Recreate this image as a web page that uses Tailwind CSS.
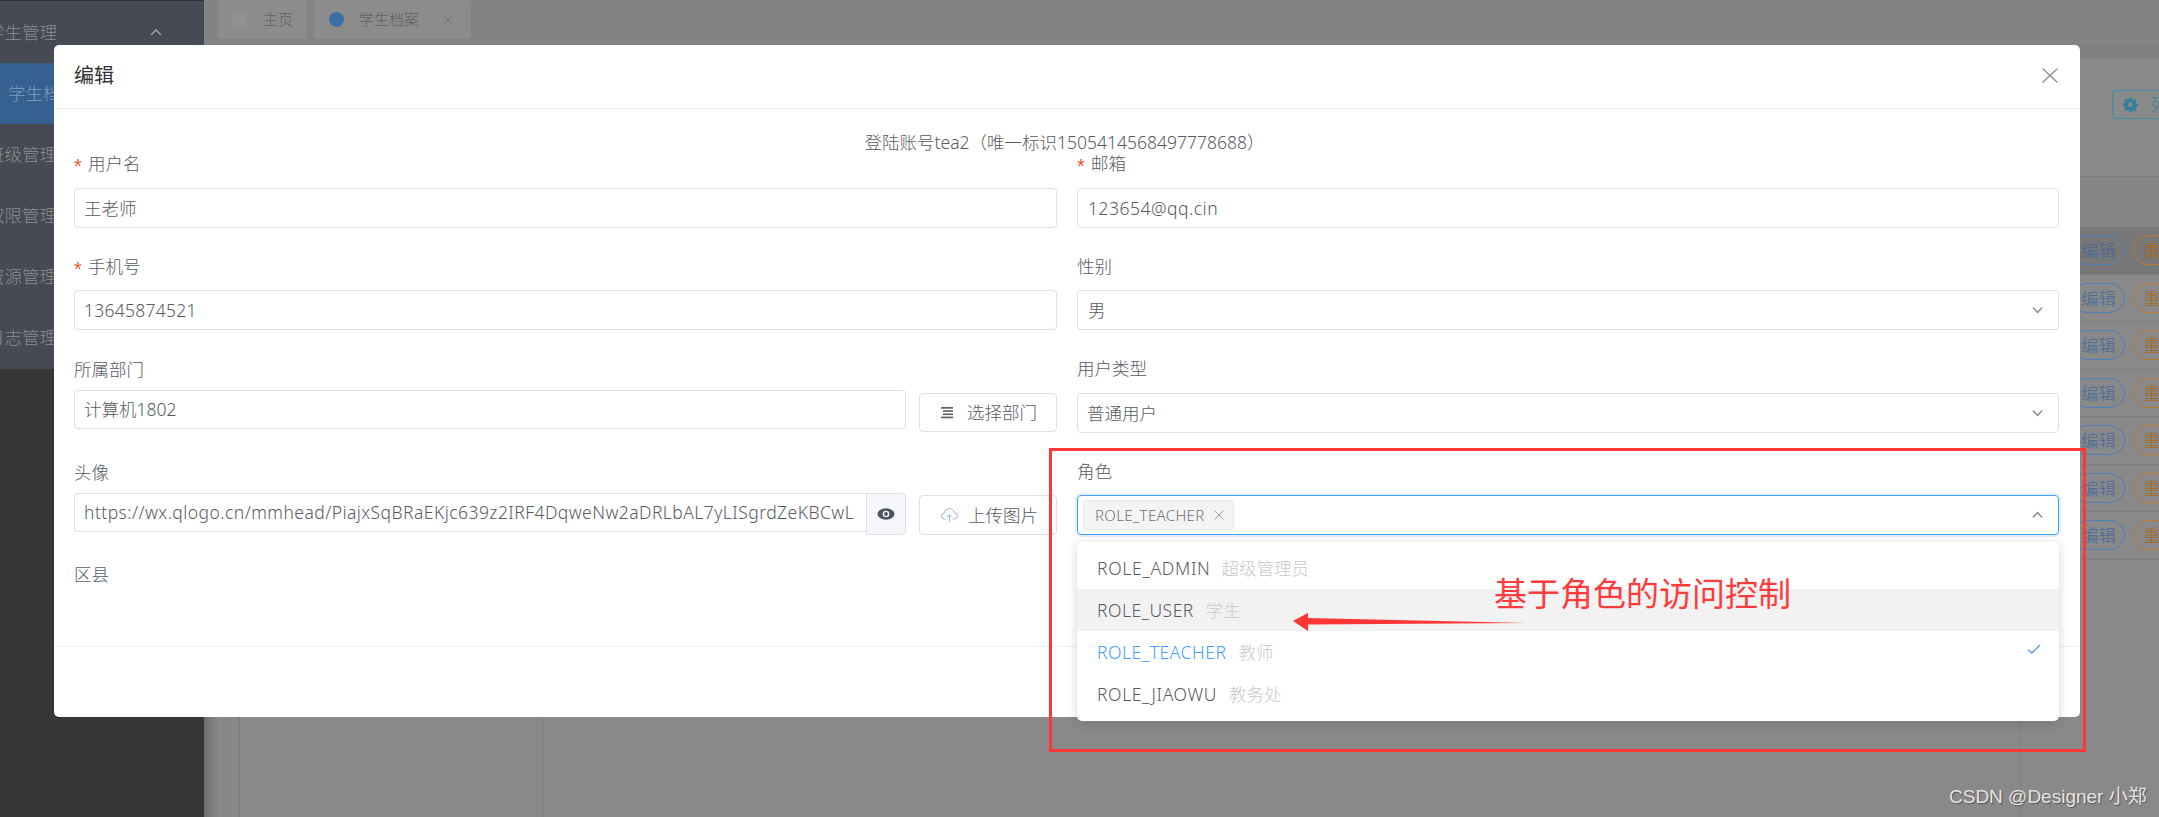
<!DOCTYPE html>
<html lang="zh-CN">
<head>
<meta charset="utf-8">
<script src="https://cdn.jsdelivr.net/npm/@tailwindcss/browser@4"></script>
<title>编辑</title>
</head>
<body class="m-0 overflow-hidden">
<div class="relative flex h-[817px] w-[2159px] overflow-hidden bg-[#898989] font-['Noto_Sans','Noto_Sans_CJK_SC',sans-serif] font-light text-[17.5px] text-[#565a63]">

  <!-- dimmed sidebar -->
  <aside class="flex h-full w-[204px] shrink-0 flex-col bg-[#363636] text-[#8c8c8c]">
    <div class="flex h-[369px] flex-col border-t border-[#333] bg-[#454a54]">
      <div class="flex h-[62px] items-center justify-between pr-[42px]"><span class="-ml-[13px] whitespace-nowrap">学生管理</span>
        <svg class="h-[8px] w-[12px]" viewBox="0 0 12 8" fill="none" stroke="#9a9a9a" stroke-width="1.6"><path d="M1 7l5-5 5 5"/></svg></div>
      <div class="flex h-[61px] items-center bg-[#35608f] pl-2 text-[#7f9dbb]"><span class="whitespace-nowrap">学生档案</span></div>
      <div class="flex h-[61px] items-center"><span class="-ml-[13px] whitespace-nowrap">班级管理</span></div>
      <div class="flex h-[61px] items-center"><span class="-ml-[13px] whitespace-nowrap">权限管理</span></div>
      <div class="flex h-[61px] items-center"><span class="-ml-[13px] whitespace-nowrap">资源管理</span></div>
      <div class="flex h-[61px] items-center"><span class="-ml-[13px] whitespace-nowrap">日志管理</span></div>
    </div>
  </aside>

  <!-- dimmed page -->
  <main class="flex h-full min-w-0 flex-1 flex-col">
    <div class="flex h-[45px] shrink-0 items-start gap-[7px] bg-[#838383] pl-[14px] text-[15px] text-[#5f5f5f]">
      <div class="flex h-[39px] w-[89px] items-center rounded-[3px] bg-[#8c8c8c] pl-[14px]"><span class="h-[15px] w-[15px] rounded-full bg-[#8e9290]"></span><span class="ml-[16px]">主页</span></div>
      <div class="flex h-[39px] w-[157px] items-center rounded-[3px] bg-[#8c8c8c] pl-[15px]"><span class="h-[15px] w-[15px] rounded-full bg-[#3b6ea5]"></span><span class="ml-[15px]">学生档案</span>
        <svg class="ml-[24px] h-[10px] w-[10px]" viewBox="0 0 10 10" fill="none" stroke="#6f6f6f" stroke-width="0.9"><path d="M1 1l8 8M9 1l-8 8"/></svg></div>
    </div>
    <div class="h-[14px] shrink-0 bg-[#7f7f7f]"></div>
    <div class="flex min-h-0 flex-1">
      <div class="w-[14px] shrink-0 bg-gradient-to-r from-[#6e6e6e] to-[#878787]"></div>
      <div class="w-[21px] shrink-0 bg-[#888]"></div>
      <div class="w-[304px] shrink-0 border-x border-[#7b7b7b]"></div>
      <div class="flex min-w-0 flex-1 flex-col text-[17.5px]">
        <div class="flex h-[118px] shrink-0 items-start justify-end border-b border-[#7d7d7d] bg-[#8a8a8a] pt-[31px]">
          <div class="-mr-[40px] flex h-[29px] w-[87px] items-center gap-[11px] rounded-[3px] border border-[#3f8fae] pl-[10px] text-[#3d7f99]">
            <svg class="h-[16px] w-[16px] shrink-0" viewBox="0 0 24 24" fill="#2f7f9f"><path fill-rule="evenodd" d="M10 1h4l.6 3.2 2 .9 2.7-1.8 2.8 2.8-1.8 2.7.9 2 3.2.6v4l-3.2.6-.9 2 1.8 2.7-2.8 2.8-2.7-1.8-2 .9L14 25h-4l-.6-3.2-2-.9-2.7 1.8-2.8-2.8 1.8-2.7-.9-2L0 14.6v-4l3.2-.6.9-2L2.300 5.300 5.100 2.500l2.700 1.800 2-.9zM12 8.500a4 4 0 100 8 4 4 0 000-8z" transform="scale(.92)"/></svg>
            <span class="whitespace-nowrap">列设置</span>
          </div>
        </div>
        <div class="h-[51px] shrink-0 border-b border-[#7d7d7d] bg-[#858585]"></div>
        <div class="flex h-[47.500px] shrink-0 items-center justify-end gap-[8px] border-b border-[#7f7f7f] bg-[#777] -mt-[1px]">
          <span class="flex h-[30px] w-[53px] items-center justify-center rounded-full border border-[#4a7fb8] text-[#46699a]">编辑</span><span class="-mr-[40px] flex h-[30px] w-[66px] items-center rounded-full border border-[#b47c2e] pl-[9px] text-[#a5691f]">重置</span>
        </div>
        <div class="flex h-[47.500px] shrink-0 items-center justify-end gap-[8px] border-b border-[#7f7f7f]">
          <span class="flex h-[30px] w-[53px] items-center justify-center rounded-full border border-[#4a7fb8] text-[#46699a]">编辑</span><span class="-mr-[40px] flex h-[30px] w-[66px] items-center rounded-full border border-[#b47c2e] pl-[9px] text-[#a5691f]">重置</span>
        </div>
        <div class="flex h-[47.500px] shrink-0 items-center justify-end gap-[8px] border-b border-[#7f7f7f]">
          <span class="flex h-[30px] w-[53px] items-center justify-center rounded-full border border-[#4a7fb8] text-[#46699a]">编辑</span><span class="-mr-[40px] flex h-[30px] w-[66px] items-center rounded-full border border-[#b47c2e] pl-[9px] text-[#a5691f]">重置</span>
        </div>
        <div class="flex h-[47.500px] shrink-0 items-center justify-end gap-[8px] border-b border-[#7f7f7f]">
          <span class="flex h-[30px] w-[53px] items-center justify-center rounded-full border border-[#4a7fb8] text-[#46699a]">编辑</span><span class="-mr-[40px] flex h-[30px] w-[66px] items-center rounded-full border border-[#b47c2e] pl-[9px] text-[#a5691f]">重置</span>
        </div>
        <div class="flex h-[47.500px] shrink-0 items-center justify-end gap-[8px] border-b border-[#7f7f7f]">
          <span class="flex h-[30px] w-[53px] items-center justify-center rounded-full border border-[#4a7fb8] text-[#46699a]">编辑</span><span class="-mr-[40px] flex h-[30px] w-[66px] items-center rounded-full border border-[#b47c2e] pl-[9px] text-[#a5691f]">重置</span>
        </div>
        <div class="flex h-[47.500px] shrink-0 items-center justify-end gap-[8px] border-b border-[#7f7f7f]">
          <span class="flex h-[30px] w-[53px] items-center justify-center rounded-full border border-[#4a7fb8] text-[#46699a]">编辑</span><span class="-mr-[40px] flex h-[30px] w-[66px] items-center rounded-full border border-[#b47c2e] pl-[9px] text-[#a5691f]">重置</span>
        </div>
        <div class="flex h-[47.500px] shrink-0 items-center justify-end gap-[8px] border-b border-[#7f7f7f]">
          <span class="flex h-[30px] w-[53px] items-center justify-center rounded-full border border-[#4a7fb8] text-[#46699a]">编辑</span><span class="-mr-[40px] flex h-[30px] w-[66px] items-center rounded-full border border-[#b47c2e] pl-[9px] text-[#a5691f]">重置</span>
        </div>
        <div class="mr-[138px] flex-1 border-r border-[#7d7d7d]"></div>
      </div>
    </div>
  </main>

  <!-- dialog -->
  <section class="absolute left-[54px] top-[45px] flex h-[672px] w-[2026px] flex-col rounded-[5px] bg-white">
    <header class="flex h-[64px] shrink-0 items-center justify-between border-b border-[#ebeef5] pb-[2px] pl-5 pr-[22px]">
      <h2 class="text-[20px] font-normal text-[#303133]">编辑</h2>
      <svg class="h-[15px] w-[16px]" viewBox="0 0 16 15" fill="none" stroke="#85888e" stroke-width="1.100"><path d="M.5.5l15 14M15.500.5l-15 14"/></svg>
    </header>
    <div class="flex-1 pl-5 pr-[21px] pt-[21px]">
      <p class="h-6 pr-[4px] text-center leading-6">登陆账号tea2（唯一标识1505414568497778688）</p>
      <div class="-mt-[2px] grid grid-cols-[983px_982px] grid-rows-[103px_102px_103px_103px_auto] gap-x-[20px]">
        <div>
          <div class="mb-3 flex h-6 items-center pb-[2px]"><span class="w-[14px] translate-y-[3px] font-['Liberation_Sans',sans-serif] text-[20px] leading-none text-[#ef5a30]">*</span>用户名</div>
          <div class="flex h-10 items-center rounded-[4px] border border-[#dcdfe6] px-[9px]">王老师</div>
        </div>
        <div>
          <div class="mb-3 flex h-6 items-center pb-[2px]"><span class="w-[14px] translate-y-[3px] font-['Liberation_Sans',sans-serif] text-[20px] leading-none text-[#ef5a30]">*</span>邮箱</div>
          <div class="flex h-10 items-center rounded-[4px] border border-[#dcdfe6] px-[10px] tracking-[0.5px]">123654@qq.cin</div>
        </div>
        <div>
          <div class="mb-[11px] flex h-6 items-center pb-[2px]"><span class="w-[14px] translate-y-[3px] font-['Liberation_Sans',sans-serif] text-[20px] leading-none text-[#ef5a30]">*</span>手机号</div>
          <div class="flex h-10 items-center rounded-[4px] border border-[#dcdfe6] px-[9px] tracking-[0.25px]">13645874521</div>
        </div>
        <div>
          <div class="mb-[11px] h-6 leading-[22px]">性别</div>
          <div class="flex h-10 items-center justify-between rounded-[4px] border border-[#dcdfe6] pl-[10px] pr-[15px]">男
            <svg class="h-[8px] w-[11px]" viewBox="0 0 11 8" fill="none" stroke="#808389" stroke-width="1.300"><path d="M1 1.500l4.500 5 4.500-5"/></svg></div>
        </div>
        <div>
          <div class="mb-[9px] h-6 leading-6">所属部门</div>
          <div class="flex items-start">
            <div class="flex h-[39px] w-[832px] items-center rounded-[4px] border border-[#dcdfe6] px-[9px]">计算机1802</div>
            <button class="ml-[13px] mt-[3px] flex h-[39px] w-[138px] items-center rounded-[4px] border border-[#dcdfe6] pl-[21px]">
              <svg class="h-[13px] w-[13px] shrink-0" viewBox="0 0 13 13" fill="#606266"><rect x="0" y="1" width="12" height="1.700"/><rect x="2" y="4.200" width="10" height="1.700"/><rect x="2" y="7.400" width="10" height="1.700"/><rect x="0" y="10.600" width="12" height="1.700"/></svg>
              <span class="ml-[13px] whitespace-nowrap">选择部门</span>
            </button>
          </div>
        </div>
        <div>
          <div class="mb-[12px] h-6 leading-[22px]">用户类型</div>
          <div class="flex h-[40px] items-center justify-between rounded-[4px] border border-[#dcdfe6] pl-[9px] pr-[15px]">普通用户
            <svg class="h-[8px] w-[11px]" viewBox="0 0 11 8" fill="none" stroke="#808389" stroke-width="1.300"><path d="M1 1.500l4.500 5 4.500-5"/></svg></div>
        </div>
        <div>
          <div class="mb-[9px] h-6 leading-6">头像</div>
          <div class="flex items-start">
            <div class="flex h-[39px] w-[792px] items-center overflow-hidden rounded-l-[4px] border border-r-0 border-[#dcdfe6] pl-[9px] pr-[10px]"><span class="block overflow-hidden whitespace-nowrap tracking-[0.45px]">https://wx.qlogo.cn/mmhead/PiajxSqBRaEKjc639z2IRF4DqweNw2aDRLbAL7yLISgrdZeKBCwL</span></div>
            <div class="flex h-[42px] w-[40px] items-center justify-center rounded-r-[4px] border border-[#dcdfe6] bg-[#f5f7fa]">
              <svg class="h-[12px] w-[18px]" viewBox="0 0 18 12"><ellipse cx="9" cy="6" rx="8.500" ry="5.800" fill="#4f5461"/><circle cx="9" cy="6" r="3.300" fill="#f5f7fa"/><circle cx="9" cy="6" r="1.900" fill="#4f5461"/></svg>
            </div>
            <button class="ml-[13px] mt-[2px] flex h-[40px] w-[138px] items-center rounded-[4px] border border-[#dcdfe6] pl-[21px]">
              <svg class="h-[15px] w-[17px] shrink-0" viewBox="0 0 17 15" fill="none" stroke="#a9b0ba" stroke-width="1"><path d="M5 11H3.500a3 3 0 01-.3-6A5.300 5.300 0 0113.500 4.500a3.300 3.300 0 01.2 6.500H12"/><path d="M8.500 14V7M6 9.200l2.500-2.500 2.500 2.500" stroke="#8cc4e8"/></svg>
              <span class="ml-[10px] whitespace-nowrap">上传图片</span>
            </button>
          </div>
        </div>
        <div class="relative">
          <div class="mb-[11px] h-6 leading-[22px]">角色</div>
          <div class="flex h-[40px] items-center justify-between rounded-[4px] border border-[#409eff] pl-[5px] pr-[15px] ring-2 ring-[#409eff]/15">
            <span class="flex h-[30px] w-[151px] items-center rounded-[3px] border border-[#e9e9eb] bg-[#f4f4f5] pl-[11px] text-[15px] tracking-[0.35px] text-[#6d7078]">ROLE_TEACHER
              <svg class="ml-[9px] h-[10px] w-[10px]" viewBox="0 0 10 10" fill="none" stroke="#909399" stroke-width="0.900"><path d="M.5.500l9 9M9.500.500l-9 9"/></svg></span>
            <svg class="h-[8px] w-[11px]" viewBox="0 0 11 8" fill="none" stroke="#808389" stroke-width="1.300"><path d="M1 6.500l4.500-5 4.500 5"/></svg>
          </div>
          <ul class="absolute left-0 right-0 top-[82px] z-10 rounded-[5px] bg-white pb-[6px] pt-[5px] shadow-[0_2px_12px_rgba(0,0,0,0.16)]">
            <li class="flex h-[42px] items-center pl-[20px]"><span class="tracking-[0.7px]">ROLE_ADMIN</span><span class="ml-[11px] text-[#c8c9cc]">超级管理员</span></li>
            <li class="flex h-[42px] items-center bg-[#f2f2f2] pl-[20px]"><span class="tracking-[0.5px]">ROLE_USER</span><span class="ml-[12px] text-[#c8c9cc]">学生</span></li>
            <li class="flex h-[42px] items-center justify-between pl-[20px] pr-[18px] text-[#409eff]"><span><span class="tracking-[0.55px]">ROLE_TEACHER</span><span class="ml-[12px] text-[#c8c9cc]">教师</span></span>
              <svg class="-mt-[6px] h-[10px] w-[14px]" viewBox="0 0 14 10" fill="none" stroke="#5b93e6" stroke-width="1.300"><path d="M1 5.500l3.800 3.500L13 1"/></svg></li>
            <li class="flex h-[42px] items-center pl-[20px]"><span class="tracking-[0.6px]">ROLE_JIAOWU</span><span class="ml-[12px] text-[#c8c9cc]">教务处</span></li>
          </ul>
        </div>
        <div class="h-6 leading-[22px]">区县</div>
      </div>
    </div>
    <footer class="h-[71px] shrink-0 border-t border-[#ebeef5]"></footer>
  </section>

  <!-- screenshot annotations -->
  <div class="absolute left-[1049px] top-[448px] z-20 h-[304px] w-[1037px] border-[3px] border-[#ff3636]"></div>
  <span class="absolute left-[1494px] top-[568px] z-20 font-['Noto_Sans_CJK_SC',sans-serif] text-[33px] font-normal leading-[48px] text-[#ff3b3b]">基于角色的访问控制</span>
  <svg class="absolute left-[1290px] top-[610px] z-20 h-[22px] w-[240px]" viewBox="0 0 240 22" fill="#ff3636"><path d="M3 11l15-8 0 5 219 5-219 1.500 0 6.500z"/></svg>
  <span class="absolute left-[1949px] top-[783px] z-20 whitespace-nowrap font-['Liberation_Sans','Noto_Sans_CJK_SC',sans-serif] text-[19px] font-normal leading-[28px] text-[#e4e4e4] [text-shadow:1px_1px_1px_#555]">CSDN @Designer 小郑</span>
</div>
</body>
</html>
